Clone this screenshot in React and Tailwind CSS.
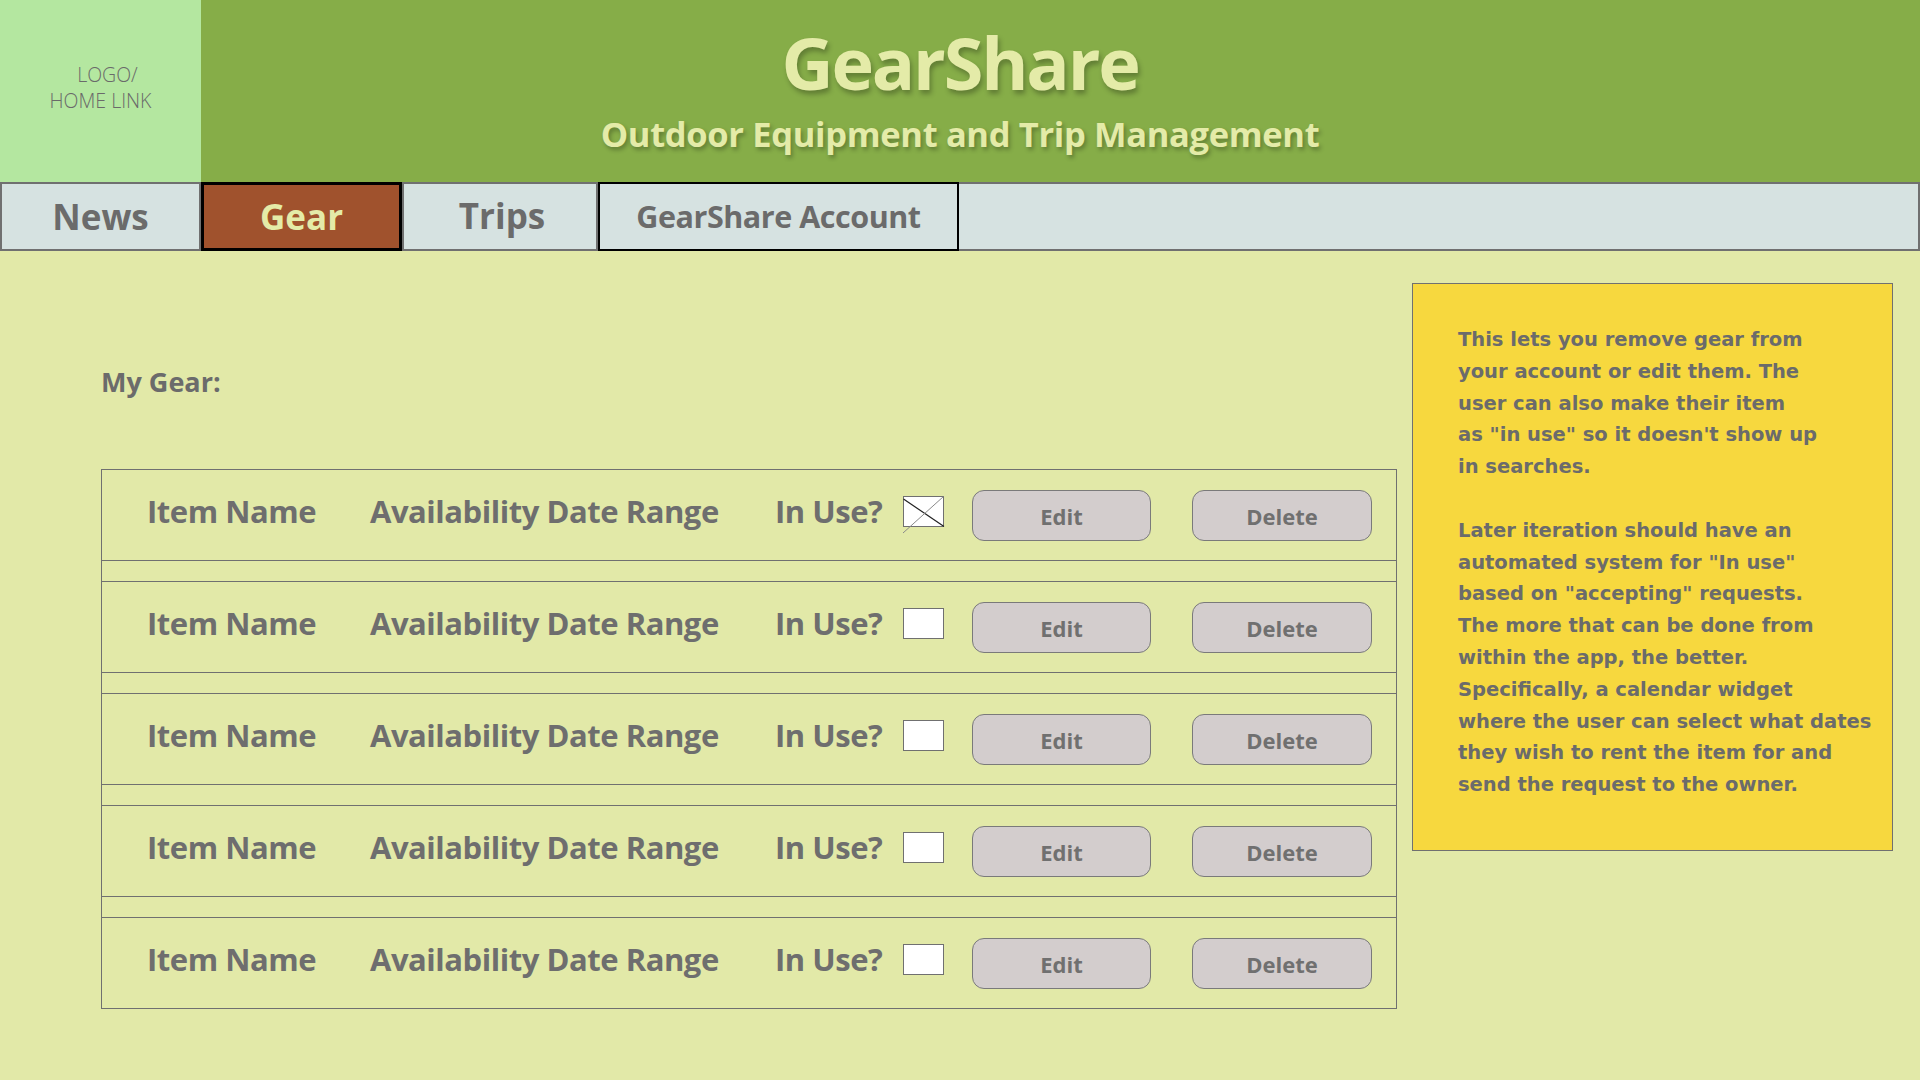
import React from "react";

const rows = [true, false, false, false, false];

function CheckBox({ crossed }) {
  return (
    <div className="relative w-[41px] h-[31px] mb-[8px] shrink-0">
      <div className="absolute inset-0 bg-white border border-[#707070]" />
      {crossed && (
        <svg className="absolute left-0 top-0 overflow-visible" width="41" height="31" viewBox="0 0 41 31">
          <line x1="0.5" y1="3" x2="41" y2="30.5" stroke="#222" strokeWidth="1.2" />
          <line x1="40.5" y1="0.5" x2="0" y2="37" stroke="#8a8a8a" strokeWidth="1" />
        </svg>
      )}
    </div>
  );
}

function Row({ crossed }) {
  return (
    <div className="h-[90px] flex items-center text-[#6e6e6e] font-bold text-[31px] tracking-[-0.015em]">
      <span className="w-[223px] pl-[45px] shrink-0 box-content mb-[7px]">Item Name</span>
      <span className="w-[405px] shrink-0 mb-[7px]">Availability Date Range</span>
      <span className="w-[128px] shrink-0 mb-[7px]">In Use?</span>
      <CheckBox crossed={crossed} />
      <button className="ml-[28px] w-[179px] h-[51px] rounded-[12px] bg-[#d3cdcd] border border-[#7a7a7a] text-[22px] font-bold text-[#707070] pt-[3px] shrink-0 tracking-normal">
        Edit
      </button>
      <button className="ml-[41px] w-[180px] h-[51px] rounded-[12px] bg-[#d3cdcd] border border-[#7a7a7a] text-[22px] font-bold text-[#707070] pt-[3px] shrink-0 tracking-normal">
        Delete
      </button>
    </div>
  );
}

export default function App() {
  return (
    <div className="w-[1920px] h-[1080px] bg-[#e2e9a8] overflow-hidden" style={{ fontFamily: '"Open Sans", "Noto Sans", sans-serif' }}>
      {/* Header */}
      <div className="flex h-[182px]">
        <div className="w-[201px] bg-[#b4e7a0] flex flex-col items-center justify-center text-[#6a6a6a] text-[19.5px] font-light leading-[26px] pb-[6px]">
          <span className="pl-[14px]">LOGO/</span>
          <span>HOME LINK</span>
        </div>
        <div className="flex-1 bg-[#86ad48] flex flex-col items-center pr-[201px] text-[#e4eba8]">
          <div className="text-[72px] font-bold leading-[80px] mt-[22px] tracking-[-0.03em] [text-shadow:2px_4px_5px_rgba(0,0,0,0.28)]">
            GearShare
          </div>
          <div className="text-[34.5px] font-bold leading-[40px] mt-[12px] tracking-[-0.01em] [text-shadow:2px_3px_4px_rgba(0,0,0,0.28)]">
            Outdoor Equipment and Trip Management
          </div>
        </div>
      </div>

      {/* Nav */}
      <div className="flex h-[69px] bg-[#d6e2e1]">
        <div className="w-[201px] border-2 border-[#707070] flex items-center justify-center text-[35px] font-bold text-[#6b6b6b] pt-[2px]">
          News
        </div>
        <div className="w-[201px] border-[3px] border-black bg-[#a0522d] flex items-center justify-center text-[35px] font-bold text-[#e4eba8] pt-[2px]">
          Gear
        </div>
        <div className="w-[196px] border-2 border-[#707070] flex items-center justify-center text-[35px] font-bold text-[#6b6b6b] pl-[4px]">
          Trips
        </div>
        <div className="w-[361px] border-2 border-black flex items-center justify-center text-[30.5px] font-bold tracking-[-0.015em] text-[#6b6b6b]">
          GearShare Account
        </div>
        <div className="flex-1 border-y-2 border-r-2 border-[#707070]" />
      </div>

      {/* Main */}
      <div className="flex">
        <div className="pl-[101px] w-[1397px] shrink-0">
          <div className="mt-[113px] text-[27px] font-bold text-[#6b6b6b] leading-[36px]">My Gear:</div>
          <div className="mt-[69px] border border-[#707070]">
            {rows.map((c, i) => (
              <React.Fragment key={i}>
                {i > 0 && <div className="h-[22px] border-y border-[#707070]" />}
                <Row crossed={c} />
              </React.Fragment>
            ))}
          </div>
        </div>
        <div className="ml-[15px] mt-[32px] w-[481px] h-[568px] bg-[#f7d83e] border border-[#707070] pl-[45px] pt-[40px] text-[#6b6b6b] font-bold text-[19.5px] leading-[31.8px]" style={{ fontFamily: '"DejaVu Sans", sans-serif' }}>
          <p>
            This lets you remove gear from<br />
            your account or edit them. The<br />
            user can also make their item<br />
            as "in use" so it doesn't show up<br />
            in searches.
          </p>
          <p className="mt-[31.8px]">
            Later iteration should have an<br />
            automated system for "In use"<br />
            based on "accepting" requests.<br />
            The more that can be done from<br />
            within the app, the better.<br />
            Specifically, a calendar widget<br />
            where the user can select what dates<br />
            they wish to rent the item for and<br />
            send the request to the owner.
          </p>
        </div>
      </div>
    </div>
  );
}
